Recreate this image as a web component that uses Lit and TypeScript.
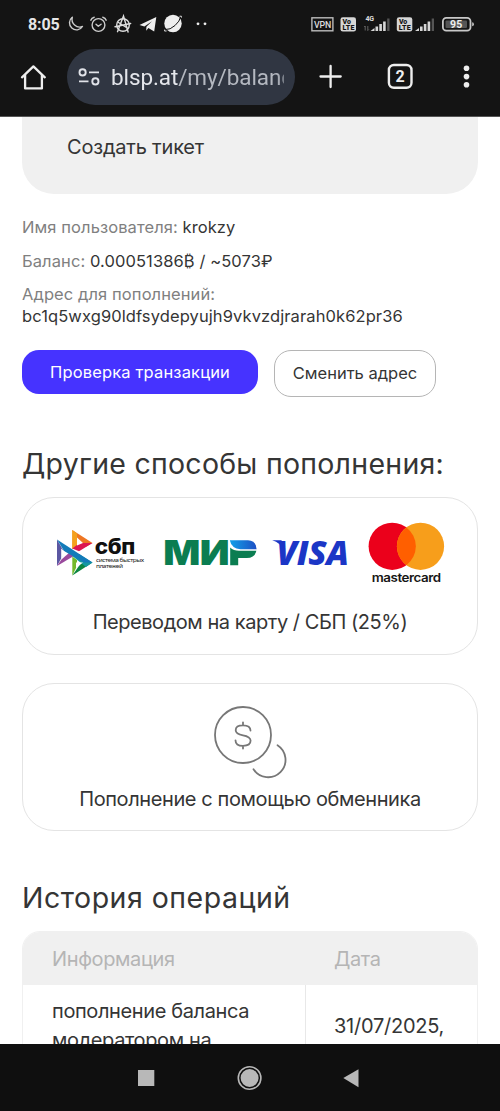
import { LitElement, html, css, svg } from "lit";
import { customElement } from "lit/decorators.js";

const signalBars = svg`
  <path d="M-.5 13 L3.5 10 V13Z M4.5 8.5h2.6V13H4.5Z M8.3 6h2.6v7H8.3Z M12.1 3.5h2.6V13h-2.6Z" fill="#d6d6d6"/>
  <path d="M16.2 .5h2.3v12.5h-2.3Z" fill="#555"/>`;

@customElement("status-bar")
class StatusBar extends LitElement {
  static styles = css`
    :host { display: flex; align-items: center; height: 48px; box-sizing: border-box; padding-left: 28px; font-family: Roboto, sans-serif; color: #e6e6e6; }
    .time { font-size: 16px; font-weight: 700; letter-spacing: -0.15px; width: 39px; line-height: 48px; padding-top: 1px; }
    svg { display: block; flex: none; }
  `;
  render() {
    return html`
      <span class="time">8:05</span>
      <svg width="433" height="48" viewBox="67 0 433 48" fill="none" font-family="Roboto, sans-serif">
        <path d="M72.3 17.3a7 7 0 1 0 10.2 9.2 7.7 7.7 0 0 1-10.2-9.2Z" stroke="#ccc" stroke-width="1.4" stroke-linejoin="round"/>
        <g stroke="#ccc" stroke-width="1.4" stroke-linecap="round" stroke-linejoin="round">
          <circle cx="98.5" cy="25" r="6.4"/><path d="M96 24.2l2.3 2 2.8-2M90.8 20.2q.8-2.4 3.4-3M106.2 20.2q-.8-2.4-3.4-3"/>
        </g>
        <g stroke="#ddd" stroke-width="1.4" stroke-linecap="round">
          <circle cx="123" cy="25" r="6.3"/><path d="M117.5 31.7 123.5 16l4.6 16M115 26.7l15.7-3.2M118.5 22.5l9.5 6"/>
        </g>
        <path d="M139.5 25 156.3 17 154.2 31.5 148.4 28 146.2 30.7 146.4 26.7 152 21.2 144.4 26.6Z" fill="#eee"/>
        <circle cx="173" cy="23.5" r="8.7" fill="#eee"/>
        <path d="M165.5 29.5q4.5.5 9.5-4t5.5-8.5" stroke="#141414" stroke-width="1"/>
        <path d="M164.6 29.6q-1 2.2 2 1.4M179.5 16.3q2.6-1 2 1.3" stroke="#ddd" stroke-width="1"/>
        <circle cx="198" cy="23.8" r="1.4" fill="#eee"/><circle cx="205" cy="23.8" r="1.4" fill="#eee"/>
        <rect x="311.9" y="17.8" width="21" height="13" stroke="#bbb" stroke-width="1.4"/>
        <text x="313.9" y="27.8" font-size="8.8" font-weight="500" textLength="17.4" fill="#ddd">VPN</text>
        <rect x="340.5" y="17.3" width="15.5" height="14.2" rx="2.3" fill="#d6d6d6"/>
        <text x="342.6" y="24" font-size="7" font-weight="900" fill="#141414">Vo</text>
        <text x="342.4" y="30.4" font-size="7" font-weight="900" textLength="12" fill="#141414">LTE</text>
        <text x="365.5" y="20.8" font-size="7" font-weight="700" textLength="8.6" fill="#ddd">4G</text>
        <path d="M365.2 30.5v-4.5m-1 1 1-1M367.8 26v4.5m1-1-1 1" stroke="#777" stroke-width=".8"/>
        <g transform="translate(371 18)">${signalBars}</g>
        <rect x="396.8" y="17.3" width="15.5" height="14.2" rx="2.3" fill="#d6d6d6"/>
        <text x="398.9" y="24" font-size="7" font-weight="900" fill="#141414">Vo</text>
        <text x="398.7" y="30.4" font-size="7" font-weight="900" textLength="12" fill="#141414">LTE</text>
        <g transform="translate(415.5 18)">${signalBars}</g>
        <rect x="442.9" y="17.9" width="27.6" height="12.8" rx="3.4" stroke="#c8c8c8" stroke-width="1.8"/>
        <rect x="445.5" y="20.5" width="21.5" height="7.6" rx="1" fill="#555"/>
        <path d="M472.2 22.2q1.7.2 1.7 2t-1.7 2Z" fill="#c8c8c8"/>
        <text x="450" y="28" font-size="10.5" font-weight="700" textLength="12.2" fill="#eee">95</text>
      </svg>`;
  }
}

@customElement("browser-bar")
class BrowserBar extends LitElement {
  static styles = css`
    :host { display: flex; align-items: center; height: 69px; padding: 0 0 11px; box-sizing: border-box; font-family: Roboto, sans-serif; }
    svg { display: block; flex: none; }
    .url { display: flex; align-items: center; width: 228px; height: 56px; box-sizing: border-box; border-radius: 28px; background: #303642; padding: 0 10px 0 11px; }
    .address { margin-left: 11px; width: 173px; overflow: hidden; white-space: nowrap; font-size: 22.5px; line-height: 34px; letter-spacing: -0.1px; color: #b4b8c0; -webkit-mask-image: linear-gradient(90deg, #000 96%, #0008); }
    .host { color: #e4e6eb; }
  `;
  render() {
    return html`
      <svg width="67" height="56" viewBox="0 0 67 56" fill="none"><path d="M22 28.3 33.4 17.4 44.8 28.3M25.1 26v13.4h16.8V26" stroke="#eee" stroke-width="2.3" stroke-linejoin="round" stroke-linecap="round"/></svg>
      <div class="url">
        <svg width="22" height="20" viewBox="0 0 22 20" fill="none" stroke="#e0e2e8" stroke-width="1.9"><circle cx="4.6" cy="5.4" r="3.1"/><path d="M11 5.4h10M1 14.4h9.5"/><circle cx="17.4" cy="14.4" r="3.1"/></svg>
        <div class="address"><span class="host">blsp.at</span>/my/balance</div>
      </div>
      <svg width="205" height="56" viewBox="295 0 205 56" fill="none">
        <path d="M320.5 27.5h20.2M330.6 17v21" stroke="#eee" stroke-width="2.3" stroke-linecap="round"/>
        <rect x="388.9" y="16" width="22.6" height="22.8" rx="5" stroke="#eee" stroke-width="2.4"/>
        <text x="395.5" y="33.2" font-size="16" font-weight="700" fill="#eee">2</text>
        <g fill="#eee"><circle cx="466.5" cy="19.3" r="2.8"/><circle cx="466.5" cy="27.6" r="2.8"/><circle cx="466.5" cy="35.8" r="2.8"/></g>
      </svg>`;
  }
}

@customElement("payment-logos")
class PaymentLogos extends LitElement {
  static styles = css`
    :host { display: flex; height: 66px; }
    svg { display: block; flex: none; }
  `;
  render() {
    return html`
      <svg width="92" height="66" viewBox="54 520 92 66">
        <path d="M57 539.5 64.5 552.5 57 566Z" fill="#5b57a2"/>
        <path d="M57 566 78 553.5 70 552 61.5 559.5Z" fill="#9a4a9d"/>
        <path d="M72.3 530 81.5 543.5 72.3 549Z" fill="#f18b21"/>
        <path d="M72.3 530 92.5 543 86 546.7 76 539.5Z" fill="#ee7623"/>
        <path d="M72.3 530 77 533.5 77 546.5 72.3 549Z" fill="#f4a11d"/>
        <path d="M72.3 548.5 79.5 543 92.5 543 79 551.2Z" fill="#dc1551"/>
        <path d="M72.3 556.5 77 560 77 566 72.3 575.5Z" fill="#74b92b"/>
        <path d="M72.3 575.5 92.5 562.5 82 561.5Z" fill="#0c8640"/>
        <path d="M72.3 556 79 554 92.5 562.5 86 567Z" fill="#1299a0"/>
        <path d="M57 539.5 92.5 562.5H84L64 551Z" fill="#137bb9"/>
        <path d="M61.2 548.5 65.4 552.6 61.2 559Z M77 537.6 83 543 77 545.4Z M76 562.5 83 562.5 76 568Z" fill="#fff"/>
        <text x="94.8" y="553.9" font-family="Inter, sans-serif" font-size="21" font-weight="800" textLength="40" lengthAdjust="spacingAndGlyphs" fill="#101010">сбп</text>
        <text x="96" y="561.9" font-family="'Noto Sans', sans-serif" font-size="5.4" textLength="47.5" lengthAdjust="spacingAndGlyphs" fill="#222">система быстрых</text>
        <text x="96" y="567.8" font-family="'Noto Sans', sans-serif" font-size="5.4" textLength="26.5" lengthAdjust="spacingAndGlyphs" fill="#222">платежей</text>
      </svg>
      <svg width="120" height="66" viewBox="146 520 120 66">
        <defs><linearGradient id="blue"><stop offset="0" stop-color="#12a0e8"/><stop offset="1" stop-color="#1d4fc4"/></linearGradient></defs>
        <text x="163.2" y="565.2" font-family="Inter, sans-serif" font-size="34.5" font-weight="900" textLength="66" lengthAdjust="spacingAndGlyphs" fill="#0b7d51">МИ</text>
        <text x="228" y="565.2" font-family="Inter, sans-serif" font-size="34" font-weight="800" textLength="28" lengthAdjust="spacingAndGlyphs" fill="#0b7d51">Р</text>
        <path d="M228.8 538H260V567H228.8Z" fill="#fff"/>
        <path d="M229.8 540.2H248Q256.6 541 256.6 549.2H240.5Q231.5 548.5 229.8 540.2Z" fill="url(#blue)"/>
        <path d="M230.2 547.5q3.3 3.3 8.8 3.3H256.4q-1.6 7.2-9.6 7.2H238.2v7.2h-8Z" fill="#0b7d51"/>
      </svg>
      <svg width="95" height="66" viewBox="266 520 95 66">
        <text x="276.5" y="564.8" font-family="'Open Sans', sans-serif" font-style="italic" font-size="34" font-weight="800" textLength="72" lengthAdjust="spacingAndGlyphs" fill="#1b36c6">VISA</text>
        <path d="M272.2 540.3H281.5L284 550Q280.5 543 272.2 540.3Z" fill="#1b36c6"/>
      </svg>
      <svg width="90" height="66" viewBox="361 520 90 66">
        <circle cx="392.2" cy="546.3" r="23.6" fill="#eb001b"/><circle cx="420.5" cy="546.3" r="23.6" fill="#f79e1b"/>
        <path d="M406.35 527.4a23.6 23.6 0 0 1 0 37.8 23.6 23.6 0 0 1 0-37.8Z" fill="#ff5f00"/>
        <text x="371.7" y="581.7" font-family="Inter, sans-serif" font-size="12" font-weight="600" textLength="69" lengthAdjust="spacingAndGlyphs" fill="#171717">mastercard</text>
      </svg>`;
  }
}

@customElement("app-root")
class AppRoot extends LitElement {
  static styles = css`
    :host { display: flex; flex-direction: column; height: 1111px; overflow: hidden; background: #fff; font-family: Inter, sans-serif; color: #353535; }
    .chrome { flex: none; background: #141414; height: 117px; box-sizing: border-box; border-bottom: 1px solid #555; }
    .page { flex: 1; min-height: 0; overflow: hidden; display: flex; flex-direction: column; padding: 0 22px; }
    .page > * { flex: none; }
    .ticket { background: #f0f0f0; height: 77px; border-radius: 0 0 32px 32px; padding: 15px 45px 0; box-sizing: border-box; font-size: 20px; line-height: 30px; letter-spacing: -0.2px; }
    .info { margin-top: 22px; font-size: 16.5px; line-height: 22px; display: flex; flex-direction: column; gap: 11.5px; letter-spacing: 0.09px; }
    .label { color: #808080; }
    .wallet { letter-spacing: 0.1px; }
    .actions { display: flex; align-items: flex-start; gap: 16px; margin-top: 23px; font-size: 16.5px; }
    .primary { width: 236px; height: 44px; border-radius: 17px; background: #4633ff; color: #fff; text-align: center; line-height: 44px; letter-spacing: 0.15px; }
    .secondary { width: 162px; height: 47px; box-sizing: border-box; border: 1.4px solid #b5b5b5; border-radius: 17px; text-align: center; line-height: 45px; }
    .title { margin: 0; font-size: 28.5px; line-height: 40px; font-weight: 400; white-space: nowrap; letter-spacing: 0.26px; }
    .ways { margin-top: 46px; padding-top: 1px; }
    .history { margin-top: 46px; padding-top: 1px; letter-spacing: 0.5px; }
    .card { border: 1.5px solid #e4e4e4; border-radius: 32px; box-sizing: border-box; width: 456px; text-align: center; font-size: 20px; line-height: 30px; letter-spacing: -0.4px; display: flex; flex-direction: column; }
    .bank { margin-top: 13px; height: 158px; padding: 22px 0 0 31px; }
    .bank .caption { margin: 21px 31px 0 0; letter-spacing: -0.45px; }
    .exchange { margin-top: 28px; height: 148px; align-items: center; padding-top: 20px; }
    .exchange .caption { margin-top: 4px; }
    .table { margin-top: 13px; width: 456px; height: 240px; box-sizing: border-box; border: 1.5px solid #f0f0f0; border-radius: 18px; overflow: hidden; font-size: 20px; line-height: 29px; letter-spacing: -0.38px; }
    .row { display: grid; grid-template-columns: 282px 1fr; }
    .row > div { padding-left: 29px; }
    .head { background: #f0f0f0; color: #b5b5b5; height: 53px; line-height: 54px; }
    .row .date { border-left: 1px solid #e8e8e8; padding-left: 28px; height: 190px; padding-top: 27px; box-sizing: border-box; letter-spacing: -0.25px; }
    .row .desc { padding-top: 12px; }
    .nav { flex: none; height: 67px; background: #0f0f0f; }
    svg { display: block; }
  `;
  render() {
    return html`
      <header class="chrome"><status-bar></status-bar><browser-bar></browser-bar></header>
      <main class="page">
        <div class="ticket">Создать тикет</div>
        <section class="info">
          <div><span class="label">Имя пользователя:</span> krokzy</div>
          <div><span class="label">Баланс:</span> 0.00051386₿ / ~5073₽</div>
          <div><span class="label">Адрес для пополнений:</span><br /><span class="wallet">bc1q5wxg90ldfsydepyujh9vkvzdjrarah0k62pr36</span></div>
        </section>
        <div class="actions"><div class="primary">Проверка транзакции</div><div class="secondary">Сменить адрес</div></div>
        <h2 class="title ways">Другие способы пополнения:</h2>
        <section class="card bank"><payment-logos></payment-logos><div class="caption">Переводом на карту / СБП (25%)</div></section>
        <section class="card exchange">
          <svg width="80" height="76" viewBox="210 704 80 76" fill="none" stroke="#777" stroke-width="1.8" stroke-linecap="round">
            <circle cx="243" cy="735" r="28"/>
            <path d="M277.5 745.2A17.4 17.4 0 1 1 253.5 769.3"/>
            <path d="M250.5 730.5q0-5.2-7.5-5.2t-7.3 5q0 3.8 7.3 5t7.6 5.2q0 5.3-7.6 5.3t-7.5-5.5M243 722.3v3M243 745.8v2.8"/>
          </svg>
          <div class="caption">Пополнение с помощью обменника</div>
        </section>
        <h2 class="title history">История операций</h2>
        <section class="table">
          <div class="row head"><div>Информация</div><div>Дата</div></div>
          <div class="row"><div class="desc">пополнение баланса<br />модератором на</div><div class="date">31/07/2025,</div></div>
        </section>
      </main>
      <footer class="nav">
        <svg width="500" height="67" viewBox="0 1044 500 67" fill="#b8b8b8">
          <rect x="138" y="1070" width="16.3" height="16"/>
          <circle cx="249.6" cy="1078" r="9"/><circle cx="249.6" cy="1078" r="11.3" fill="none" stroke="#b8b8b8" stroke-width="1.6"/>
          <path d="M343.3 1078 358.5 1069.2V1087.3Z"/>
        </svg>
      </footer>`;
  }
}
